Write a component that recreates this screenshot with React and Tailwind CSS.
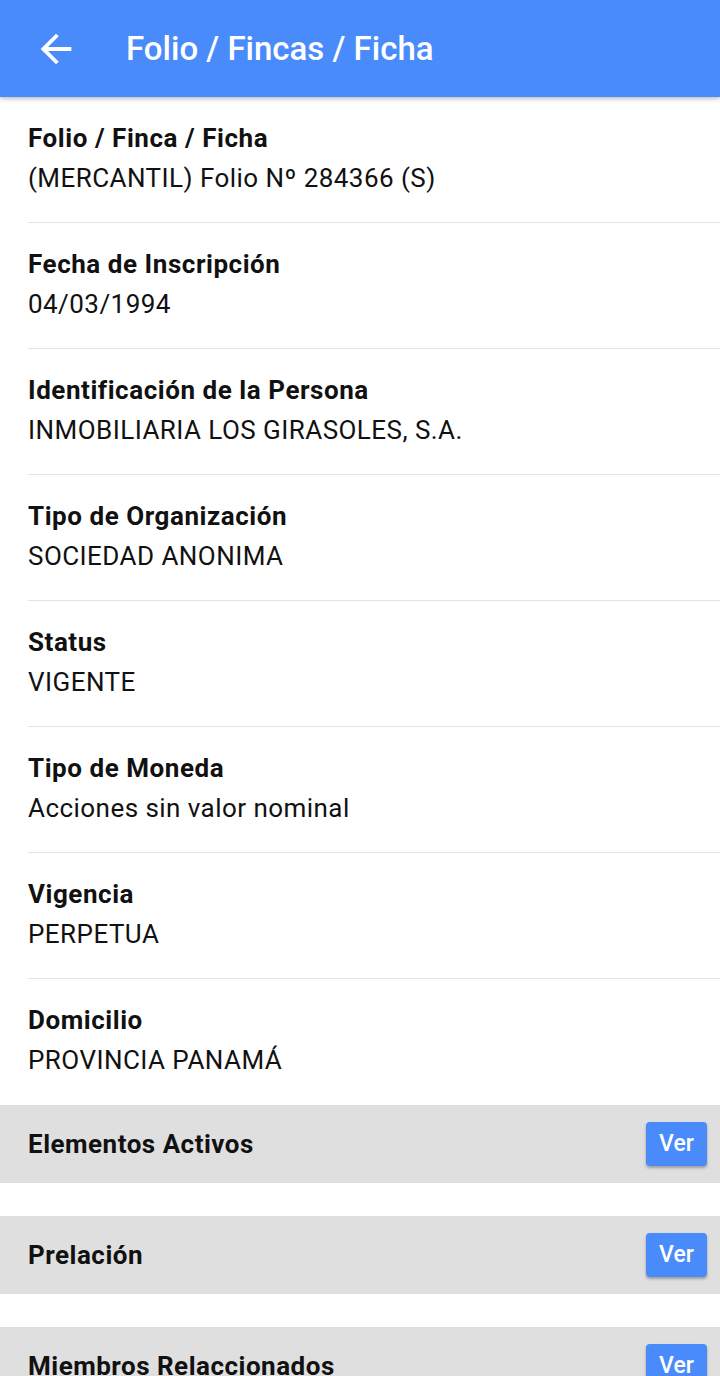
import React from "react";

const items = [
  ["Folio / Finca / Ficha", "(MERCANTIL) Folio Nº 284366 (S)"],
  ["Fecha de Inscripción", "04/03/1994"],
  ["Identificación de la Persona", "INMOBILIARIA LOS GIRASOLES, S.A."],
  ["Tipo de Organización", "SOCIEDAD ANONIMA"],
  ["Status", "VIGENTE"],
  ["Tipo de Moneda", "Acciones sin valor nominal"],
  ["Vigencia", "PERPETUA"],
  ["Domicilio", "PROVINCIA PANAMÁ"],
];

const sections = ["Elementos Activos", "Prelación", "Miembros Relaccionados"];

export default function App() {
  return (
    <div
      className="w-[720px] h-[1376px] overflow-hidden bg-white text-[#111]"
      style={{ fontFamily: "Roboto, 'Liberation Sans', sans-serif" }}
    >
      <header className="relative z-10 h-[97px] bg-[#4a8bfc] flex items-center shadow-[0_2px_4px_rgba(0,0,0,0.25)]">
        <svg
          className="ml-[33px] mt-[1px]"
          width="46"
          height="46"
          viewBox="0 0 24 24"
          fill="white"
        >
          <path d="M20 11H7.83l5.59-5.59L12 4l-8 8 8 8 1.41-1.41L7.83 13H20v-2z" />
        </svg>
        <h1 className="ml-[47px] text-[33px] font-medium text-white">
          Folio / Fincas / Ficha
        </h1>
      </header>
      <div className="pl-[28px]">
        {items.map(([label, value], i) => (
          <div
            key={label}
            className={
              "pt-[21px] pb-[24px] " +
              (i < items.length - 1 ? "border-b border-[#e3e3e3]" : "")
            }
          >
            <div className="text-[26px] leading-[40px] font-bold tracking-[0.55px]">{label}</div>
            <div className="text-[26px] leading-[40px] tracking-[0.45px]">{value}</div>
          </div>
        ))}
      </div>
      <div className="flex flex-col gap-[33px] mt-[1px]">
        {sections.map((s) => (
          <div
            key={s}
            className="h-[78px] bg-[#dfdfdf] flex items-center justify-between pl-[28px] pr-[13px]"
          >
            <span className="text-[26px] font-bold tracking-[0.5px]">{s}</span>
            <button className="w-[61px] h-[44px] rounded-[4px] bg-[#4a8bfc] text-white text-[23px] font-medium shadow-[0_2px_3px_rgba(0,0,0,0.3)]">
              Ver
            </button>
          </div>
        ))}
      </div>
    </div>
  );
}
